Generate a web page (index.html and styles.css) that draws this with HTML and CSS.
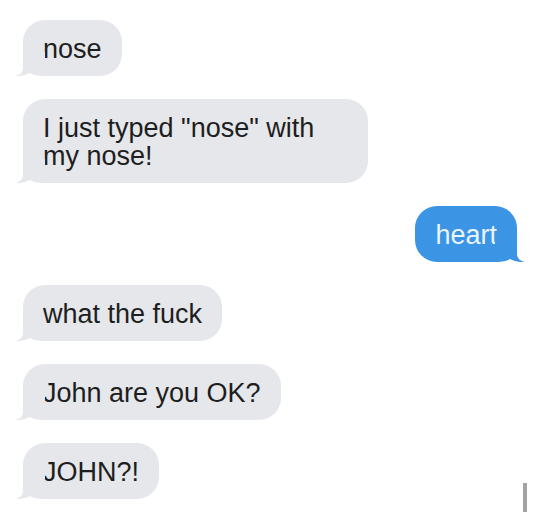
FILE: index.html
```html
<!DOCTYPE html>
<html>
<head>
<meta charset="utf-8">
<link rel="stylesheet" href="styles.css">
</head>
<body>
<div class="chat">
  <div class="msg in">nose<svg class="tail" viewBox="0 0 30 24"><path d="M8,0 L8,16 C8,20 5,23 0,24 C6,24.5 11,23 15,21 C18,23 22,24 30,24 L30,0 Z"/></svg></div>
  <div class="msg in wide">I just typed "nose" with my nose!<svg class="tail" viewBox="0 0 30 24"><path d="M8,0 L8,16 C8,20 5,23 0,24 C6,24.5 11,23 15,21 C18,23 22,24 30,24 L30,0 Z"/></svg></div>
  <div class="msg out">heart<svg class="tail" viewBox="0 0 30 24"><path d="M8,0 L8,16 C8,20 5,23 0,24 C6,24.5 11,23 15,21 C18,23 22,24 30,24 L30,0 Z"/></svg></div>
  <div class="msg in">what the fuck<svg class="tail" viewBox="0 0 30 24"><path d="M8,0 L8,16 C8,20 5,23 0,24 C6,24.5 11,23 15,21 C18,23 22,24 30,24 L30,0 Z"/></svg></div>
  <div class="msg in">John are you OK?<svg class="tail" viewBox="0 0 30 24"><path d="M8,0 L8,16 C8,20 5,23 0,24 C6,24.5 11,23 15,21 C18,23 22,24 30,24 L30,0 Z"/></svg></div>
  <div class="msg in">JOHN?!<svg class="tail" viewBox="0 0 30 24"><path d="M8,0 L8,16 C8,20 5,23 0,24 C6,24.5 11,23 15,21 C18,23 22,24 30,24 L30,0 Z"/></svg></div>
</div>
<div class="scrollbar"></div>
</body>
</html>
```
FILE: styles.css
```css
html, body {
  margin: 0;
  padding: 0;
  background: #ffffff;
  width: 540px;
  height: 512px;
  overflow: hidden;
}
body {
  position: relative;
  font-family: "Liberation Sans", Arial, sans-serif;
}
.chat {
  display: flex;
  flex-direction: column;
  align-items: flex-start;
  gap: 23px;
  padding: 20px 23px 0 23px;
}
.msg {
  position: relative;
  box-sizing: border-box;
  width: fit-content;
  padding: 15px 20px 13px 20px;
  border-radius: 22px;
  font-size: 27px;
  line-height: 28px;
  color: #1e1e1e;
  background: #e5e7ea;
}
.msg.wide {
  max-width: 345px;
}
.msg.out {
  align-self: flex-end;
  background: #3b94e4;
  color: #eaf5fd;
}
.tail {
  position: absolute;
  bottom: 0;
  left: -8px;
  width: 30px;
  height: 24px;
  fill: #e5e7ea;
}
.msg.out .tail {
  left: auto;
  right: -8px;
  transform: scaleX(-1);
  fill: #3b94e4;
}
.scrollbar {
  position: absolute;
  left: 523px;
  top: 483px;
  width: 4px;
  height: 29px;
  background: #a3a3a3;
}
```
